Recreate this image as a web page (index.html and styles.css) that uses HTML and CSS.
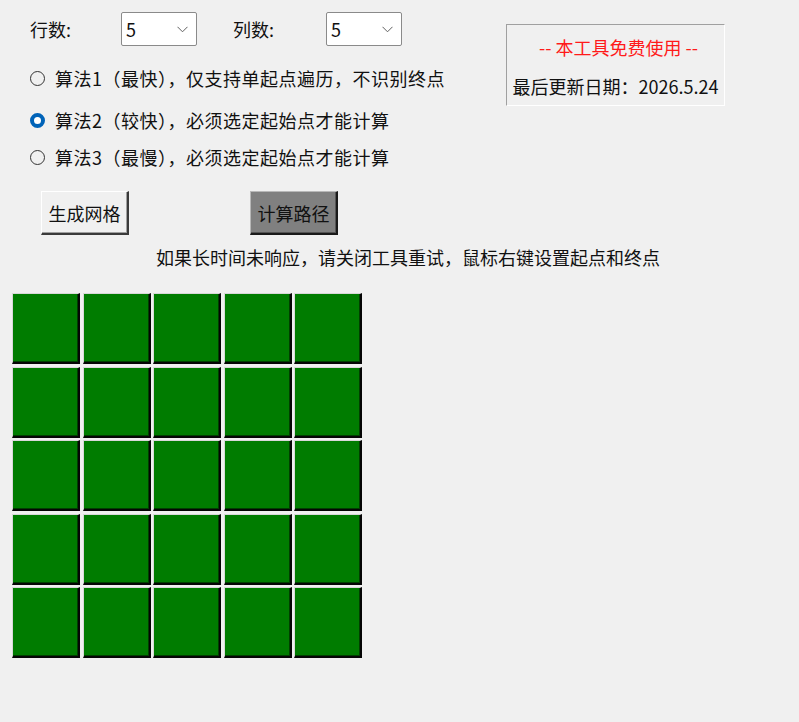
FILE: index.html
```html
<!DOCTYPE html>
<html lang="zh-CN">
<head>
<meta charset="utf-8">
<title>路径计算工具</title>
<link rel="stylesheet" href="styles.css">
</head>
<body>
<div class="app">
  <div class="top">
    <div class="controls">
      <div class="size-row">
        <span class="label label-rows">行数:</span>
        <div class="combo"><span class="combo-value">5</span>
          <svg class="chev" width="11" height="7" viewBox="0 0 11 7"><path d="M0.5 0.8 L5.5 5.8 L10.5 0.8" fill="none" stroke="#5f5f5f" stroke-width="1"/></svg>
        </div>
        <span class="label label-cols">列数:</span>
        <div class="combo"><span class="combo-value">5</span>
          <svg class="chev" width="11" height="7" viewBox="0 0 11 7"><path d="M0.5 0.8 L5.5 5.8 L10.5 0.8" fill="none" stroke="#5f5f5f" stroke-width="1"/></svg>
        </div>
      </div>
      <div class="algos">
        <label class="radio r1"><span class="dot"></span>算法1（最快），仅支持单起点遍历，不识别终点</label>
        <label class="radio r2"><span class="dot on"></span>算法2（较快），必须选定起始点才能计算</label>
        <label class="radio r3"><span class="dot"></span>算法3（最慢），必须选定起始点才能计算</label>
      </div>
    </div>
    <div class="info">
      <div class="free">-- 本工具免费使用 --</div>
      <div class="updated">最后更新日期：2026.5.24</div>
    </div>
  </div>
  <div class="actions">
    <button class="btn btn-gen">生成网格</button>
    <button class="btn btn-calc">计算路径</button>
  </div>
  <div class="hint">如果长时间未响应，请关闭工具重试，鼠标右键设置起点和终点</div>
  <div class="grid">
    <div class="cell"></div><div class="cell"></div><div class="cell"></div><div class="cell"></div><div class="cell"></div>
    <div class="cell"></div><div class="cell"></div><div class="cell"></div><div class="cell"></div><div class="cell"></div>
    <div class="cell"></div><div class="cell"></div><div class="cell"></div><div class="cell"></div><div class="cell"></div>
    <div class="cell"></div><div class="cell"></div><div class="cell"></div><div class="cell"></div><div class="cell"></div>
    <div class="cell"></div><div class="cell"></div><div class="cell"></div><div class="cell"></div><div class="cell"></div>
  </div>
</div>
</body>
</html>
```

FILE: styles.css
```css
html, body {
  margin: 0;
  padding: 0;
  background: #f0f0f0;
}

body {
  font-family: "Noto Sans CJK SC", "Noto Sans", sans-serif;
  font-size: 18px;
  color: #111;
  width: 799px;
  height: 722px;
  overflow: hidden;
}

.top {
  display: flex;
}

.controls {
  width: 506px;
}

/* rows / columns selectors */
.size-row {
  display: flex;
  align-items: center;
  padding-top: 12px;
  padding-left: 30px;
  height: 34px;
}

.label {
  line-height: 34px;
}

.label-rows {
  width: 91px;
}

.label-cols {
  width: 93px;
  margin-left: 36px;
}

.combo {
  box-sizing: border-box;
  width: 76px;
  height: 34px;
  background: #fff;
  border: 1px solid #8a8a8a;
  border-radius: 2px;
  display: flex;
  align-items: center;
  justify-content: space-between;
  padding: 0 8px 0 4px;
}

.combo-value {
  line-height: 1;
}

.chev {
  display: block;
  margin-top: 1px;
}

/* algorithm choices */
.algos {
  display: flex;
  flex-direction: column;
  padding-left: 30px;
}

.radio {
  display: flex;
  align-items: center;
  height: 26px;
  line-height: 26px;
  letter-spacing: 0.5px;
  white-space: nowrap;
}

.r1 { margin-top: 19px; }
.r2 { margin-top: 16px; }
.r3 { margin-top: 11px; }

.dot {
  box-sizing: border-box;
  width: 15px;
  height: 15px;
  border-radius: 50%;
  border: 1px solid #333;
  background: #f0f0f0;
  margin-right: 10px;
  flex: none;
}

.dot.on {
  border: 4px solid #0063b8;
  background: #fff;
}

/* info panel */
.info {
  box-sizing: border-box;
  width: 219px;
  height: 82px;
  margin-top: 24px;
  border-top: 1px solid #a0a0a0;
  border-left: 1px solid #a0a0a0;
  border-right: 1px solid #fff;
  border-bottom: 1px solid #fff;
  display: flex;
  flex-direction: column;
  align-items: center;
  white-space: nowrap;
}

.free {
  color: #ff1a1a;
  margin-top: 9px;
  line-height: 26px;
  padding-left: 6px;
}

.updated {
  margin-top: 13px;
  line-height: 26px;
}

/* buttons */
.actions {
  display: flex;
  padding-left: 41px;
  margin-top: 21px;
}

.btn {
  box-sizing: border-box;
  width: 88px;
  height: 44px;
  font: inherit;
  color: #111;
  padding: 0;
  border-top: 1px solid #fff;
  border-left: 1px solid #fff;
  border-right: 2px solid #3a3a3a;
  border-bottom: 2px solid #3a3a3a;
  box-shadow: inset -1px -1px 0 #a0a0a0;
  background: #f0f0f0;
}

.btn-calc {
  margin-left: 121px;
  background: #808080;
  border-top-color: #b8b8b8;
  border-left-color: #b8b8b8;
  border-right-color: #1a1a1a;
  border-bottom-color: #1a1a1a;
  box-shadow: inset -1px -1px 0 #555;
}

.hint {
  padding-left: 156px;
  margin-top: 8px;
  line-height: 28px;
  white-space: nowrap;
}

/* field of cells */
.grid {
  display: grid;
  grid-template-columns: repeat(5, 68px);
  grid-auto-rows: 71px;
  column-gap: 2.5px;
  row-gap: 2.5px;
  padding-left: 12px;
  margin-top: 22px;
}

.cell {
  box-sizing: border-box;
  background: #007c00;
  border-top: 1px solid #d8d8d8;
  border-left: 1px solid #d8d8d8;
  border-right: 2px solid #050505;
  border-bottom: 2px solid #050505;
  box-shadow: inset -1px -1px 0 #003f00;
}
```
